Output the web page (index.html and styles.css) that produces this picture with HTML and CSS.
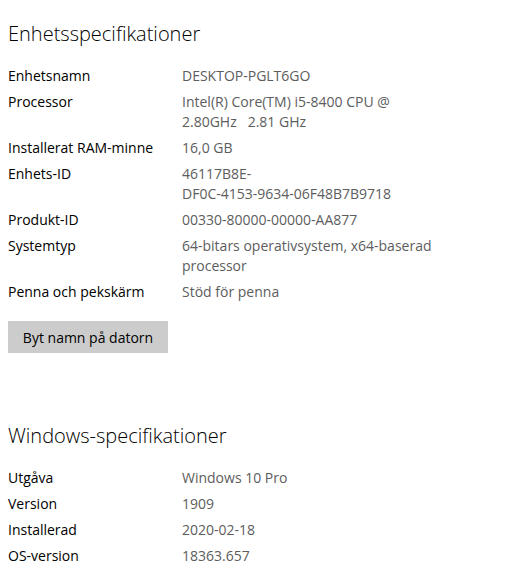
FILE: index.html
```html
<!DOCTYPE html>
<html>
<head>
    <title>Om</title>
    <meta http-equiv="Content-Type" content="text/html; charset=utf-8" />
    <link rel="stylesheet" href="styles.css">
</head>
<body>
<div class="page">
    <div class="section">
        <div class="title">Enhetsspecifikationer</div>
        <div class="spec-list">
            <div class="spec-name">Enhetsnamn</div>
            <div class="spec-value">DESKTOP-PGLT6GO</div>
            <div class="spec-name">Processor</div>
            <div class="spec-value">Intel(R) Core(TM) i5-8400 CPU @ 2.80GHz&nbsp;&nbsp; 2.81 GHz</div>
            <div class="spec-name">Installerat RAM-minne</div>
            <div class="spec-value">16,0 GB</div>
            <div class="spec-name">Enhets-ID</div>
            <div class="spec-value">46117B8E-<br>DF0C-4153-9634-06F48B7B9718</div>
            <div class="spec-name">Produkt-ID</div>
            <div class="spec-value">00330-80000-00000-AA877</div>
            <div class="spec-name">Systemtyp</div>
            <div class="spec-value">64-bitars operativsystem, x64-baserad processor</div>
            <div class="spec-name">Penna och pekskärm</div>
            <div class="spec-value">Stöd för penna</div>
        </div>
        <div class="rename-button">Byt namn på datorn</div>
    </div>

    <div class="section windows">
        <div class="title">Windows-specifikationer</div>
        <div class="spec-list">
            <div class="spec-name">Utgåva</div>
            <div class="spec-value">Windows 10 Pro</div>
            <div class="spec-name">Version</div>
            <div class="spec-value">1909</div>
            <div class="spec-name">Installerad</div>
            <div class="spec-value">2020-02-18</div>
            <div class="spec-name">OS-version</div>
            <div class="spec-value">18363.657</div>
        </div>
    </div>
</div>
</body>
</html>
```

FILE: styles.css
```css
html, body {margin: 0; height: 100%; overflow: hidden; background: white;}
.page{
    display: flex;
    flex-direction: column;
    padding: 20px 8px 0 8px;
    font-family: "Open Sans", "Noto Sans", sans-serif;
}
.section{
    display: flex;
    flex-direction: column;
    align-items: flex-start;
}
.windows{
    margin-top: 69px;
}
.title{
    font-size: 20px;
    font-weight: 300;
    line-height: 28px;
    color: #000;
}
.spec-list{
    display: grid;
    grid-template-columns: 174px 262px;
    row-gap: 6px;
    margin-top: 18px;
    font-size: 14px;
    line-height: 20px;
}
.spec-name{
    color: #000;
}
.spec-value{
    color: #5d5d5d;
}
.rename-button{
    display: flex;
    align-items: center;
    justify-content: center;
    margin-top: 19px;
    width: 160px;
    height: 32px;
    background: #cccccc;
    color: #000;
    font-size: 14px;
}
```
